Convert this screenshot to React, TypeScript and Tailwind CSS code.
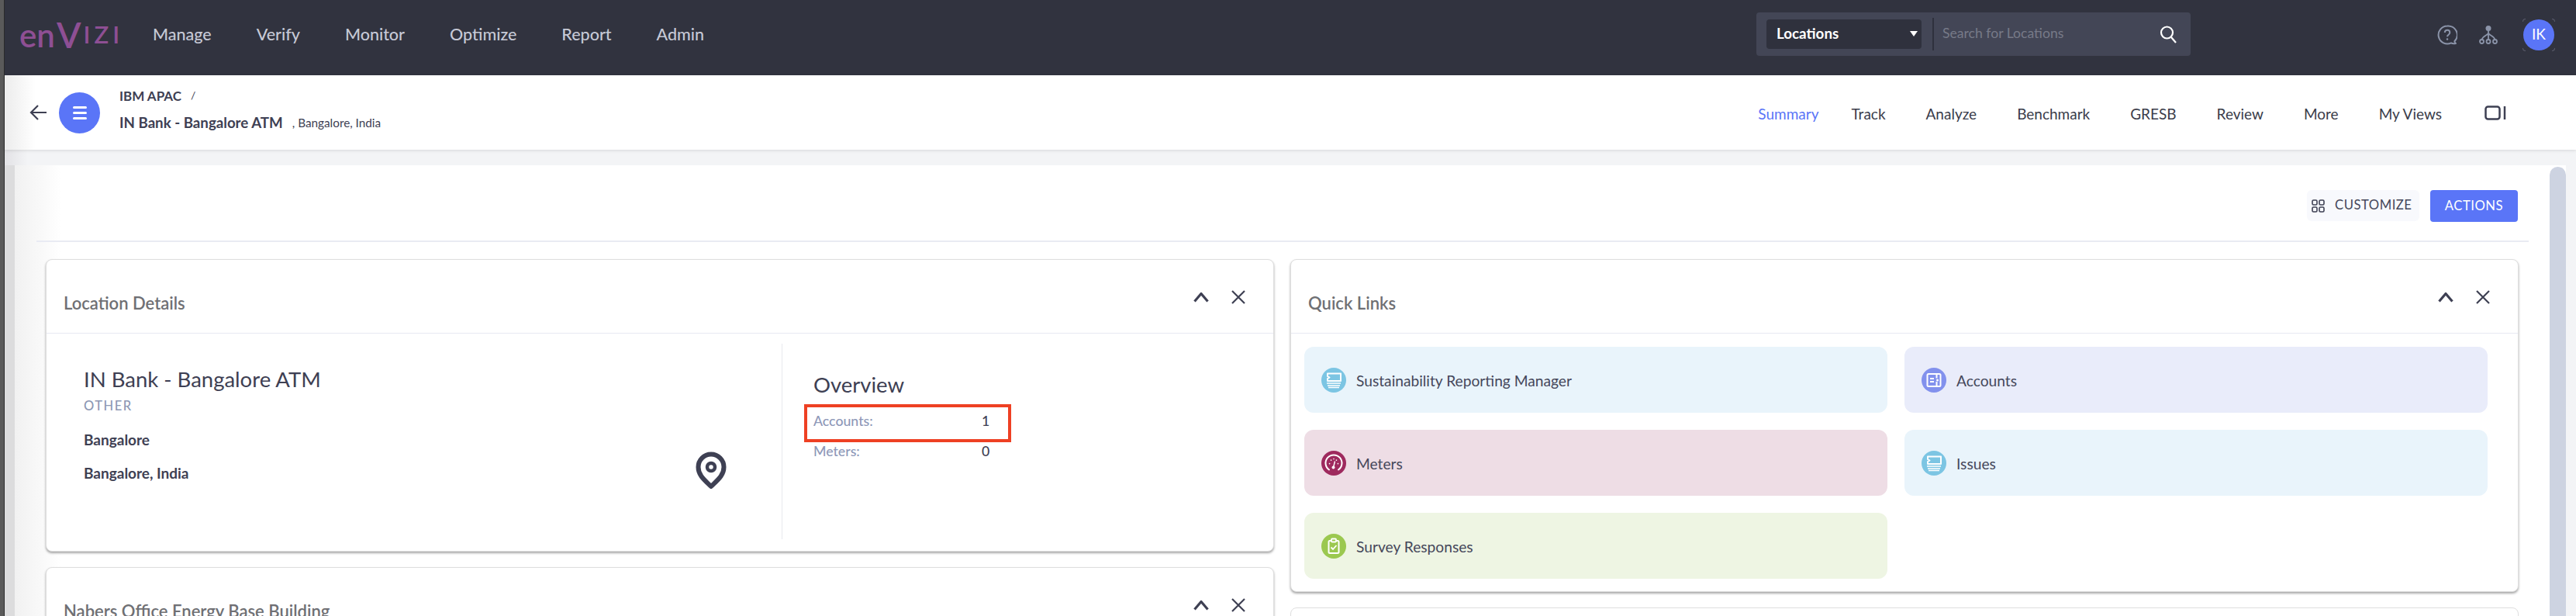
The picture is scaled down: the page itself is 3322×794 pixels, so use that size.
import { ReactNode } from 'react';

const mainNav = ['Manage', 'Verify', 'Monitor', 'Optimize', 'Report', 'Admin'];
const subNav = ['Track', 'Analyze', 'Benchmark', 'GRESB', 'Review', 'More', 'My Views'];

function TicketIcon() {
  return (
    <svg viewBox="0 0 32 32" className="h-8 w-8" fill="none" stroke="#fff">
      <path d="M8 7.500h17v9.500H8v-3l2.500-1.500L8 11z" strokeWidth="2" strokeLinejoin="round" />
      <path d="M7 20h18M8 23h16M9 25.500h14" strokeWidth="1.700" />
    </svg>
  );
}

function AccountsIcon() {
  return (
    <svg viewBox="0 0 32 32" className="h-8 w-8" fill="none" stroke="#fff">
      <rect x="7.500" y="8" width="17" height="16" rx="1.500" strokeWidth="2" />
      <path d="M19.500 8v5.500M19.500 18v6" strokeWidth="2" />
      <path d="M11 14h5M11 18h5" strokeWidth="1.800" />
      <circle cx="20.500" cy="16" r="1.500" fill="#fff" stroke="none" />
    </svg>
  );
}

function GaugeIcon() {
  return (
    <svg viewBox="0 0 32 32" className="h-8 w-8" fill="none" stroke="#fff">
      <path d="M10 24.500a10.500 10.500 0 1 1 12 0" strokeWidth="2" strokeLinecap="round" />
      <path d="M10.500 16.500l.1.1M12.500 12l.1.1M16 10.500v.1M19.500 12l-.1.1M21.500 16.500l-.1.1" strokeWidth="1.600" strokeLinecap="round" />
      <path d="M17.500 13.500l-1.700 7" strokeWidth="1.400" />
      <circle cx="15.500" cy="21.500" r="2" fill="#fff" stroke="none" />
    </svg>
  );
}

function ClipboardIcon() {
  return (
    <svg viewBox="0 0 32 32" className="h-8 w-8" fill="none" stroke="#fff">
      <rect x="9.500" y="9" width="13" height="16" rx="1.500" strokeWidth="2" />
      <rect x="13" y="6.500" width="6" height="4" rx="1" strokeWidth="1.800" fill="#9bc850" />
      <path d="M12.500 17.500l2.500 2.500 4.500-5" strokeWidth="1.800" />
    </svg>
  );
}

function ChevronUpIcon() {
  return (
    <svg viewBox="0 0 20 14" className="h-[14px] w-5" fill="none" stroke="#3e4053" strokeWidth="3.200">
      <path d="M1.500 12.500L10 2.500l8.500 10" strokeLinejoin="round" />
    </svg>
  );
}

function CloseIcon() {
  return (
    <svg viewBox="0 0 20 18" className="h-[18px] w-5" fill="none" stroke="#3e4053" strokeWidth="2.200">
      <path d="M2 1l16 16M18 1L2 17" />
    </svg>
  );
}

function Card({
  title,
  className,
  children,
}: {
  title: string;
  className?: string;
  children?: ReactNode;
}) {
  return (
    <div
      className={`rounded-lg border border-[#dedede] bg-white shadow-[0_2px_3px_rgba(0,0,0,0.35)] ${className ?? ''}`}
    >
      <div className="flex h-[95px] items-center justify-between border-b border-[#e8e9f2] pr-[35px] pl-[22px]">
        <span className="pt-4 text-[22px] font-semibold text-[#6f7074]">{title}</span>
        <div className="flex items-center gap-[28px] pt-[2px]">
          <ChevronUpIcon />
          <CloseIcon />
        </div>
      </div>
      {children}
    </div>
  );
}

function QuickLink({
  label,
  bg,
  circle,
  icon,
}: {
  label: string;
  bg: string;
  circle: string;
  icon: ReactNode;
}) {
  return (
    <div className={`flex h-[85px] items-center rounded-xl pl-[22px] ${bg}`}>
      <div className={`flex h-8 w-8 items-center justify-center rounded-full ${circle}`}>{icon}</div>
      <span className="ml-[13px] pt-1 text-[19.200px] text-[#45475a]">{label}</span>
    </div>
  );
}

export default function App() {
  return (
    <div className="flex h-[794px] w-[3322px] overflow-hidden bg-white font-['Lato',sans-serif]">
      <div className="w-[6px] shrink-0 border-r border-[#2b2b2b] bg-[#5a5a5a]" />

      <div className="flex min-w-0 flex-1 flex-col">
        {/* Top bar */}
        <header className="flex h-[97px] shrink-0 items-center bg-[#31333f] pr-[27px] pb-[8px] pl-[19px]">
          <div className="flex h-[50px] w-[107px] items-center text-[#8e4f94]">
            <span className="text-[42px] leading-none font-semibold">en</span>
            <span className="ml-[2px] text-[46px] leading-none font-semibold">V</span>
            <span className="ml-[3px] text-[31px] leading-none font-semibold tracking-[5px]">IZI</span>
          </div>
          <nav className="ml-[65px] flex items-center gap-[58px] text-[21.500px] font-medium text-[#c6c9d6]">
            {mainNav.map(item => (
              <span key={item}>{item}</span>
            ))}
          </nav>

          <div className="mb-[2px] ml-auto flex h-[56px] w-[560px] items-center rounded-sm bg-[#434656] pl-[13px]">
            <div className="flex h-[38px] w-[200px] items-center justify-between rounded-sm bg-[#2f313d] pr-[5px] pl-[13px]">
              <span className="text-[18.800px] font-bold text-white">Locations</span>
              <span className="h-0 w-0 border-x-[5.500px] border-t-[7px] border-x-transparent border-t-white" />
            </div>
            <div className="ml-[14px] h-[42px] w-[2px] bg-[#2f313d]" />
            <span className="ml-[11px] text-[17.600px] text-[#777a88]">Search for Locations</span>
            <svg viewBox="0 0 24 24" className="mr-[17px] ml-auto h-[24px] w-[24px]" fill="none" stroke="#fff" strokeWidth="2.200">
              <circle cx="10.500" cy="10" r="7.500" />
              <path d="M16 16l6 7" />
            </svg>
          </div>

          <div className="ml-[318px] flex items-center">
            <svg viewBox="0 0 26 26" className="h-[26px] w-[26px]" fill="none" stroke="#8b94a9" strokeWidth="2">
              <path d="M13 1.500a11.500 11.500 0 1 0 5 21.900c1.500.9 3 1 6 .6-1-.8-1.500-1.600-1.700-2.800A11.500 11.500 0 0 0 13 1.500z" strokeLinejoin="round" />
              <path d="M9.800 10c.2-4.300 6.400-4.300 6.500-.1.100 2.800-3.300 2.700-3.300 5.300" strokeWidth="2" />
              <circle cx="13" cy="18.500" r="1.200" fill="#8b94a9" stroke="none" />
            </svg>
            <svg viewBox="0 0 24 24" className="ml-[28px] h-[24px] w-[24px]" fill="none" stroke="#8b94a9" strokeWidth="1.800">
              <circle cx="12" cy="3.500" r="3.500" fill="#8b94a9" stroke="none" />
              <path d="M12 6v13M12 10c-2 3-7 3-8.500 8M12 10c2 3 7 3 8.500 8" />
              <circle cx="3.500" cy="20.500" r="2.500" />
              <circle cx="12" cy="20.500" r="2.500" />
              <circle cx="20.500" cy="20.500" r="2.500" />
            </svg>
            <div className="relative ml-[32px] h-[42px] w-[42px]">
              <div className="absolute top-[1px] left-[1px] flex h-10 w-10 items-center justify-center rounded-full bg-[#5a75f7] text-[19px] text-white">
                IK
              </div>
              <span className="absolute top-0 left-0 h-1 w-1 rounded-tl-sm border-t border-l border-[#5a5d6c]" />
              <span className="absolute top-0 right-0 h-1 w-1 rounded-tr-sm border-t border-r border-[#5a5d6c]" />
              <span className="absolute bottom-0 left-0 h-1 w-1 rounded-bl-sm border-b border-l border-[#5a5d6c]" />
              <span className="absolute right-0 bottom-0 h-1 w-1 rounded-br-sm border-r border-b border-[#5a5d6c]" />
            </div>
          </div>
        </header>

        {/* Sub header */}
        <div className="relative z-10 flex h-[96px] shrink-0 items-center bg-[linear-gradient(to_right,#ececec,#fff_40px)] pr-[90px] pl-[32px] shadow-[0_1px_4px_rgba(0,0,0,0.12)]">
          <svg viewBox="0 0 22 22" className="h-[22px] w-[22px]" fill="none" stroke="#3e4053" strokeWidth="2.200">
            <path d="M22 11H2M11 2l-9 9 9 9" />
          </svg>
          <div className="ml-[16px] flex h-[53px] w-[53px] flex-col items-center justify-center gap-[4px] rounded-full bg-[#5a75f7]">
            <span className="h-[3px] w-[18px] rounded-sm bg-white" />
            <span className="h-[3px] w-[18px] rounded-sm bg-white" />
            <span className="h-[3px] w-[18px] rounded-sm bg-white" />
          </div>
          <div className="mb-[8px] ml-[25px] flex flex-col text-[#3e4053]">
            <div className="flex h-[24px] items-center">
              <span className="text-[17px] font-bold">IBM APAC</span>
              <span className="mb-[3px] ml-[12px] text-[14px]">/</span>
            </div>
            <div className="mt-[10px] flex h-[24px] items-center">
              <span className="text-[18.700px] font-bold">IN Bank - Bangalore ATM</span>
              <span className="ml-[12px] text-[15.300px]">, Bangalore, India</span>
            </div>
          </div>
          <nav className="mt-[4px] ml-auto flex items-center gap-[52px] text-[19px] text-[#3a3c4a]">
            <span className="-mr-[10px] text-[#5a75f7]">Summary</span>
            {subNav.map(item => (
              <span key={item}>{item}</span>
            ))}
            <svg viewBox="0 0 28 20" className="mb-[2px] ml-[3px] h-5 w-[28px]" fill="none" stroke="#3e4053" strokeWidth="2.500">
              <rect x="1.500" y="1.500" width="18" height="16" rx="3" />
              <path d="M26 1v17" />
            </svg>
          </nav>
        </div>

        {/* Content */}
        <div className="flex min-h-0 flex-1 flex-col bg-[#f3f4f6]">
          <div className="h-5 shrink-0 bg-[linear-gradient(to_right,#e2e2e5,#f3f4f6_30px)]" />
          <div className="flex min-h-0 flex-1">
            <div className="w-[13px] shrink-0 bg-[#dcdcdd]" />
            <div className="relative w-[3290px] shrink-0 bg-[linear-gradient(to_right,#f1f1f1,#fff_60px)]">
              <div className="flex justify-end pt-8 pr-[62px]">
                <div className="flex h-[40px] w-[145px] items-center rounded-md bg-[#f8f9fd] pl-[6px]">
                  <svg viewBox="0 0 17 17" className="h-[17px] w-[17px]" fill="none" stroke="#3e4053" strokeWidth="1.600">
                    <rect x="1" y="1" width="6" height="6" rx="1.500" />
                    <rect x="10" y="1" width="6" height="6" rx="1.500" />
                    <rect x="1" y="10" width="6" height="6" rx="1.500" />
                    <rect x="10" y="10" width="6" height="6" rx="1.500" />
                  </svg>
                  <span className="ml-[13px] text-[16.700px] tracking-[0.500px] text-[#45475a]">CUSTOMIZE</span>
                </div>
                <div className="ml-[14px] flex h-[41px] w-[113px] items-center justify-center rounded-sm bg-[#5a75f7] text-[16.700px] tracking-[0.500px] text-white">
                  ACTIONS
                </div>
              </div>
              <div className="mt-6 mr-[48px] ml-[28px] h-[2px] bg-[#e9ebf3]" />

              <div className="mt-[22px] flex gap-[21px] pl-[40px]">
                <div className="flex w-[1584px] flex-col gap-5">
                  <Card title="Location Details" className="h-[377px]">
                    <div className="flex">
                      <div className="mt-[13px] flex h-[252px] w-[949px] border-r border-[#e8e9ee] pr-[71px] pl-[48px]">
                        <div className="flex-1 pt-[28px] text-[#3e4053]">
                          <div className="flex h-[36px] items-center text-[27.500px]">IN Bank - Bangalore ATM</div>
                          <div className="mt-[6px] flex h-5 items-center text-[16.500px] font-medium tracking-[1.500px] text-[#8d98b4]">OTHER</div>
                          <div className="mt-[22px] flex h-6 items-center text-[19px] font-bold">Bangalore</div>
                          <div className="mt-[19px] flex h-6 items-center text-[19px] font-bold">Bangalore, India</div>
                        </div>
                        <svg viewBox="0 0 40 48" className="mt-[139px] h-12 w-10" fill="none" stroke="#3e4053">
                          <path d="M20 45C12 37 3.500 31 3.500 20a16.500 16.500 0 0 1 33 0c0 11-8.500 17-16.500 25z" strokeWidth="6" strokeLinejoin="round" />
                          <circle cx="20" cy="20" r="5" strokeWidth="4.500" />
                        </svg>
                      </div>
                      <div className="mt-[13px] pt-[35px] pl-[40px] text-[#3e4053]">
                        <div className="flex h-[36px] items-center text-[27.500px]">Overview</div>
                        <div className="relative mt-[17px] flex h-6 w-[227px] items-center justify-between text-[17.700px] font-medium">
                          <span className="text-[#8e98b8]">Accounts:</span>
                          <span className="w-[10px] text-center">1</span>
                          <div className="absolute -top-[10px] -left-[12px] h-[49px] w-[267px] border-4 border-[#ee4023]" />
                        </div>
                        <div className="mt-[15px] flex h-6 w-[227px] items-center justify-between text-[17.700px] font-medium">
                          <span className="text-[#8e98b8]">Meters:</span>
                          <span className="w-[10px] text-center">0</span>
                        </div>
                      </div>
                    </div>
                  </Card>
                  <Card title="Nabers Office Energy Base Building" className="h-[300px]" />
                </div>

                <div className="flex w-[1584px] flex-col gap-5">
                  <Card title="Quick Links" className="h-[429px]">
                    <div className="grid grid-cols-[752px_752px] gap-x-[22px] gap-y-[22px] pt-[17px] pl-[17px]">
                      <QuickLink label="Sustainability Reporting Manager" bg="bg-[#e9f4fb]" circle="bg-[#7cc5e3]" icon={<TicketIcon />} />
                      <QuickLink label="Accounts" bg="bg-[#e9ecfa]" circle="bg-[#8291ed]" icon={<AccountsIcon />} />
                      <QuickLink label="Meters" bg="bg-[#eedde5]" circle="bg-[#9e2a5e]" icon={<GaugeIcon />} />
                      <QuickLink label="Issues" bg="bg-[#e9f4fb]" circle="bg-[#7cc5e3]" icon={<TicketIcon />} />
                      <QuickLink label="Survey Responses" bg="bg-[#eef5e3]" circle="bg-[#9bc850]" icon={<ClipboardIcon />} />
                    </div>
                  </Card>
                  <div className="h-[300px] rounded-lg border border-[#dedede] bg-white" />
                </div>
              </div>

              {/* Scrollbar */}
              <div className="absolute top-[2px] right-0 bottom-0 w-[21px] rounded-t-full bg-[#cdd3e1]" />
            </div>
          </div>
        </div>
      </div>
    </div>
  );
}
